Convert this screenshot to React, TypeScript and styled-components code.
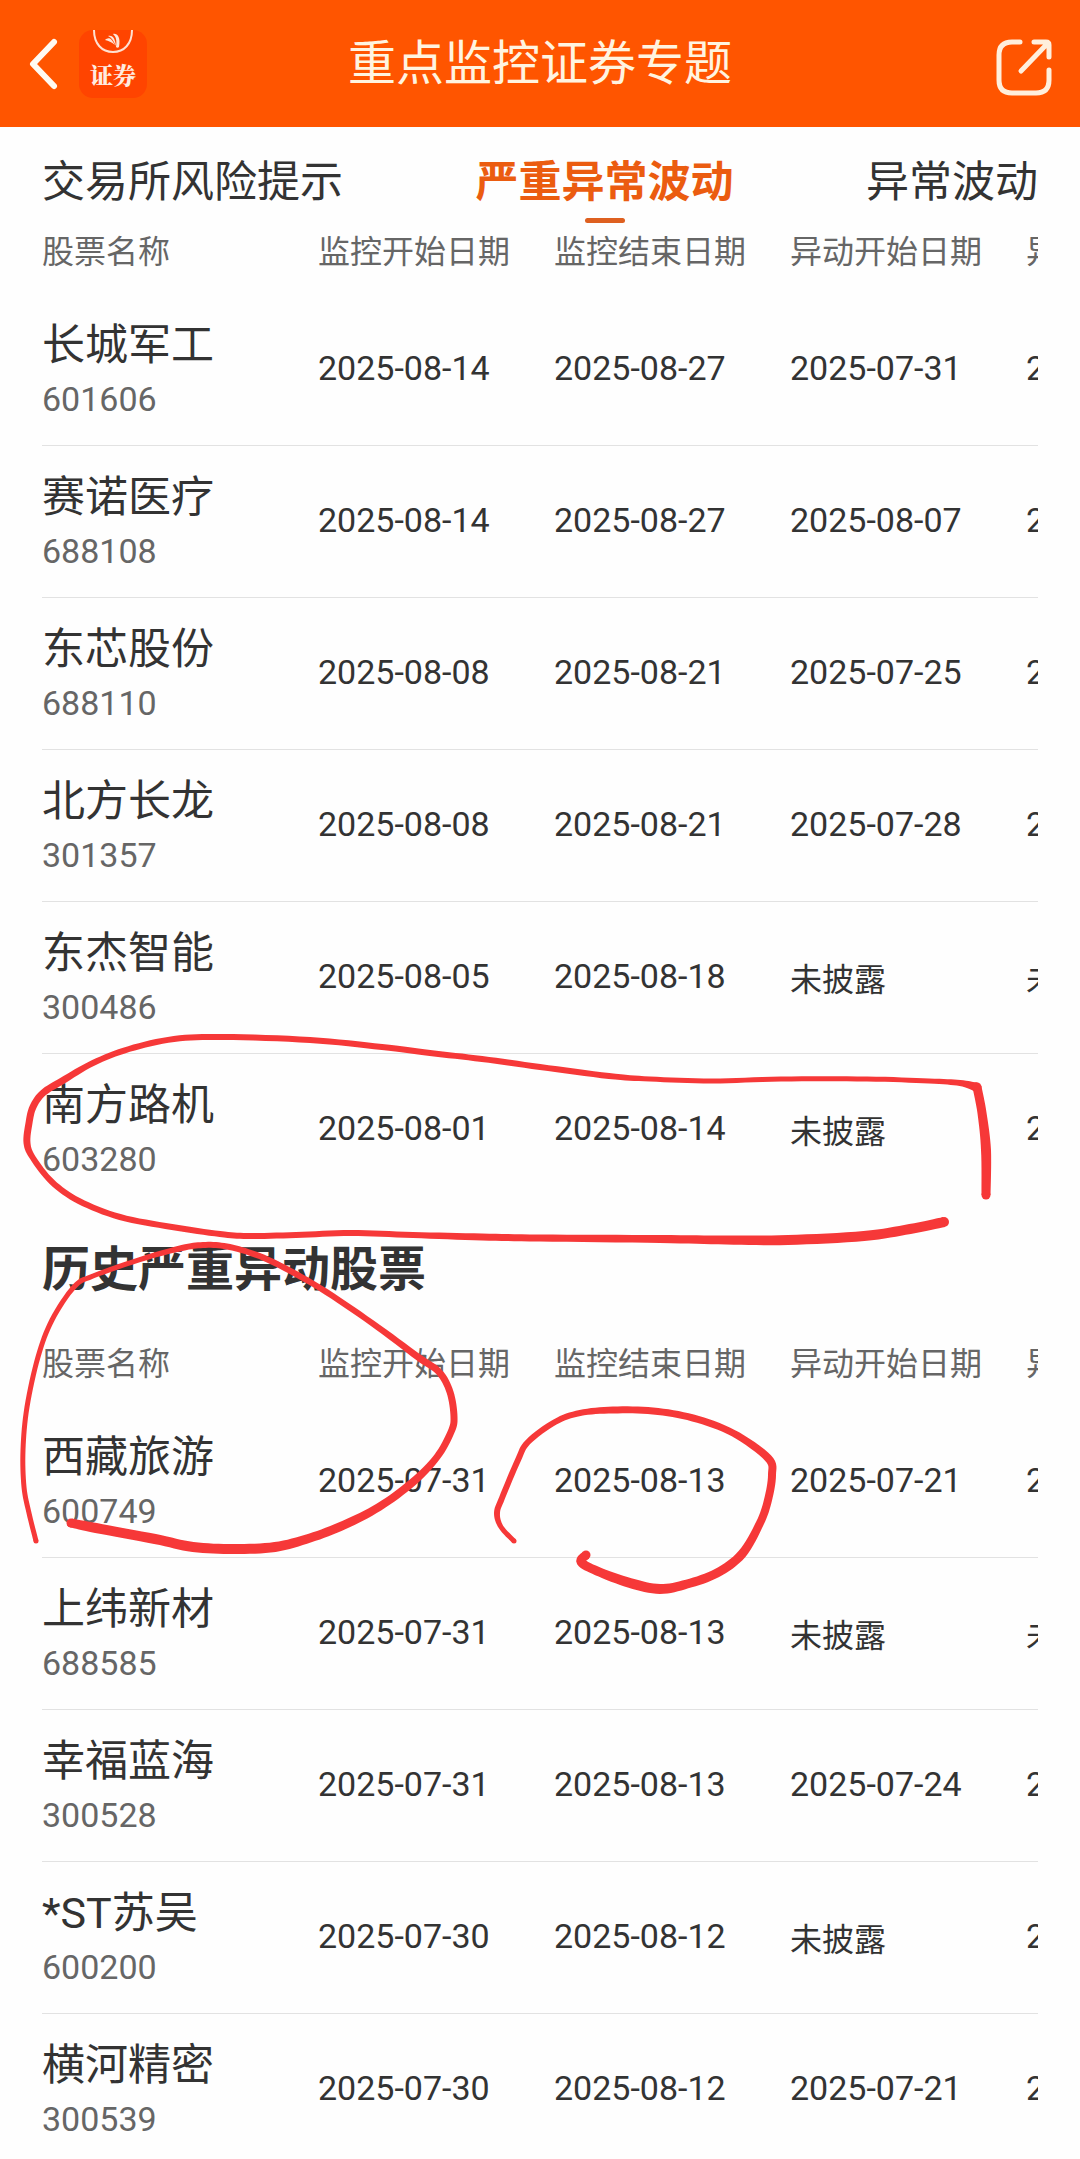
import React from "react";
import styled, { createGlobalStyle, css } from "styled-components";

const GlobalStyle = createGlobalStyle`
  * { box-sizing: border-box; }
  html, body { margin: 0; padding: 0; background: #fefefe; }
  body {
    font-family: Roboto, "Noto Sans CJK SC", sans-serif;
    color: #333333;
  }
  button { font: inherit; border: 0; padding: 0; background: none; color: inherit; cursor: pointer; }
`;

const Screen = styled.div`
  display: flex;
  flex-direction: column;
  height: 100vh;
  overflow: hidden;
`;

const TopBar = styled.header`
  flex: none;
  display: grid;
  grid-template-columns: 1fr auto 1fr;
  align-items: center;
  height: 127px;
  padding: 0 24px;
  background: #ff5500;
`;

const BarGroup = styled.div<{ $end?: boolean }>`
  display: flex;
  align-items: center;
  gap: 16px;
  justify-content: ${(p) => (p.$end ? "flex-end" : "flex-start")};
`;

const Title = styled.h1`
  margin: 0;
  font-size: 48px;
  line-height: 64px;
  font-weight: 400;
  color: #fff4e0;
`;

const IconButton = styled.button`
  display: flex;
  align-items: center;
  justify-content: center;
`;

const Brand = styled.a`
  display: flex;
  flex-direction: column;
  align-items: center;
  width: 68px;
  height: 68px;
  border-radius: 14px;
  background: #ff4400;
  color: #ffece0;
  text-decoration: none;
  font-family: "Noto Serif CJK SC", "Noto Sans CJK SC", serif;
  font-size: 23px;
  line-height: 38px;
  font-weight: 900;
`;

const Tabs = styled.nav`
  flex: none;
  display: flex;
  justify-content: space-between;
  height: 102px;
  padding: 23px 42px 0;
`;

const Tab = styled.button<{ $active?: boolean }>`
  display: flex;
  flex-direction: column;
  align-items: center;
  align-self: flex-start;
  gap: 4px;
  font-size: 43px;
  line-height: 64px;
  white-space: nowrap;
  ${(p) =>
    p.$active &&
    css`
      font-weight: 700;
      color: #eb5c10;
      &::after {
        content: "";
        width: 40px;
        height: 5px;
        border-radius: 3px;
        background: #de6020;
      }
    `}
`;

const Content = styled.main`
  flex: 1;
  min-height: 0;
  position: relative;
  overflow-y: auto;
  scrollbar-width: none;
`;

const TableScroller = styled.div`
  margin: 0 42px;
  overflow-x: auto;
  scrollbar-width: none;
`;

const StockTable = styled.table`
  width: 1208px;
  table-layout: fixed;
  border-collapse: separate;
  border-spacing: 0;
`;

const NameCol = styled.col`
  width: 264px;
`;

const DateCol = styled.col`
  width: 236px;
`;

const HeadCell = styled.th<{ $first?: boolean }>`
  height: 65px;
  padding: 0 0 0 ${(p) => (p.$first ? 0 : 12)}px;
  vertical-align: top;
  text-align: left;
  font-size: 32px;
  line-height: 46px;
  font-weight: 400;
  color: #666666;
  white-space: nowrap;
`;

const Row = styled.tr`
  & > * {
    height: 152px;
    border-bottom: 1px solid #e2e2e2;
  }
  &:last-child > * {
    border-bottom-color: transparent;
  }
`;

const NameCell = styled.th`
  padding: 19px 0 0;
  vertical-align: top;
  text-align: left;
  font-weight: 400;
`;

const StockName = styled.div`
  font-size: 43px;
  line-height: 64px;
  white-space: nowrap;
`;

const StockCode = styled.div`
  font-size: 34px;
  line-height: 44px;
  color: #666666;
`;

const ValueCell = styled.td<{ $text?: boolean }>`
  padding: ${(p) => (p.$text ? 56 : 52)}px 0 0 12px;
  vertical-align: top;
  font-size: ${(p) => (p.$text ? 32 : 34)}px;
  line-height: 44px;
  white-space: nowrap;
`;

const SectionTitle = styled.h2`
  margin: 0;
  padding: 32px 42px 39px;
  font-size: 48px;
  line-height: 64px;
  font-weight: 700;
`;

const InkLayer = styled.svg`
  position: absolute;
  top: 0;
  left: 0;
  pointer-events: none;
`;

const NONE = "未披露";
const COLUMNS = ["股票名称", "监控开始日期", "监控结束日期", "异动开始日期", "异动结束日期"];

type Stock = { name: string; code: string; values: string[] };

const current: Stock[] = [
  { name: "长城军工", code: "601606", values: ["2025-08-14", "2025-08-27", "2025-07-31", "2025-08-13"] },
  { name: "赛诺医疗", code: "688108", values: ["2025-08-14", "2025-08-27", "2025-08-07", "2025-08-13"] },
  { name: "东芯股份", code: "688110", values: ["2025-08-08", "2025-08-21", "2025-07-25", "2025-08-07"] },
  { name: "北方长龙", code: "301357", values: ["2025-08-08", "2025-08-21", "2025-07-28", "2025-08-07"] },
  { name: "东杰智能", code: "300486", values: ["2025-08-05", "2025-08-18", NONE, NONE] },
  { name: "南方路机", code: "603280", values: ["2025-08-01", "2025-08-14", NONE, "2025-07-31"] },
];

const history: Stock[] = [
  { name: "西藏旅游", code: "600749", values: ["2025-07-31", "2025-08-13", "2025-07-21", "2025-07-30"] },
  { name: "上纬新材", code: "688585", values: ["2025-07-31", "2025-08-13", NONE, NONE] },
  { name: "幸福蓝海", code: "300528", values: ["2025-07-31", "2025-08-13", "2025-07-24", "2025-07-30"] },
  { name: "*ST苏吴", code: "600200", values: ["2025-07-30", "2025-08-12", NONE, "2025-07-29"] },
  { name: "横河精密", code: "300539", values: ["2025-07-30", "2025-08-12", "2025-07-21", "2025-07-29"] },
];

function Stocks({ rows, label }: { rows: Stock[]; label: string }) {
  return (
    <TableScroller>
      <StockTable aria-label={label}>
        <colgroup>
          <NameCol />
          <DateCol />
          <DateCol />
          <DateCol />
          <DateCol />
        </colgroup>
        <thead>
          <tr>
            {COLUMNS.map((c, i) => (
              <HeadCell key={c} scope="col" $first={i === 0}>
                {c}
              </HeadCell>
            ))}
          </tr>
        </thead>
        <tbody>
          {rows.map((r) => (
            <Row key={r.code}>
              <NameCell scope="row">
                <StockName>{r.name}</StockName>
                <StockCode>{r.code}</StockCode>
              </NameCell>
              {r.values.map((v, i) => (
                <ValueCell key={i} $text={v === NONE}>
                  {v}
                </ValueCell>
              ))}
            </Row>
          ))}
        </tbody>
      </StockTable>
    </TableScroller>
  );
}

/* Hand-drawn marks: each point is [x, y, pen width]. */
type Ink = [number, number, number][];

const inks: Ink[] = [
  [
    [944, 1222, 10], [910, 1229, 10], [864, 1236, 10], [788, 1240, 10], [726, 1240, 9], [660, 1239, 8],
    [540, 1238, 7], [482, 1237, 7], [413, 1235, 6], [351, 1233, 6], [296, 1235, 6], [248, 1236, 6],
    [220, 1234, 6], [172, 1227, 6], [120, 1217, 6], [79, 1201, 6], [52, 1182, 6], [33, 1158, 6],
    [27, 1143, 7], [29, 1123, 7], [33, 1107, 7], [43, 1093, 7], [62, 1081, 7], [93, 1063, 6],
    [129, 1049, 6], [174, 1039, 6], [224, 1037, 6], [310, 1040, 6], [382, 1047, 6], [430, 1053, 6],
    [482, 1059, 6], [540, 1067, 6], [609, 1076, 6], [650, 1079, 5], [712, 1081, 5], [781, 1079, 5],
    [867, 1079, 5], [929, 1081, 5], [960, 1083, 6], [976, 1087, 9],
  ],
  [[977, 1087, 9], [982, 1113, 9], [986, 1150, 10], [986, 1195, 9]],
  [
    [71, 1523, 9], [96, 1528, 10], [155, 1539, 10], [193, 1547, 10], [234, 1549, 10], [275, 1547, 10],
    [310, 1538, 9], [344, 1525, 9], [379, 1507, 8], [413, 1482, 8], [437, 1457, 7], [451, 1432, 7],
    [454, 1417, 7], [450, 1392, 7], [439, 1372, 7], [418, 1357, 7], [372, 1323, 6], [320, 1288, 6],
    [275, 1263, 6], [248, 1252, 6], [224, 1246, 6], [203, 1245, 6], [182, 1248, 6], [145, 1258, 5],
    [93, 1276, 5], [74, 1287, 5], [52, 1320, 5], [38, 1357, 5], [27, 1407, 5], [23, 1450, 5],
    [24, 1487, 5], [29, 1513, 5], [36, 1541, 5],
  ],
  [
    [586, 1555, 9], [581, 1562, 9], [597, 1571, 9], [630, 1583, 10], [660, 1589, 10], [687, 1584, 9],
    [717, 1573, 9], [742, 1554, 9], [760, 1523, 8], [768, 1500, 8], [772, 1475, 8], [768, 1458, 8],
    [733, 1433, 7], [693, 1418, 7], [653, 1411, 7], [613, 1410, 7], [580, 1413, 6], [555, 1422, 6],
    [528, 1442, 6], [518, 1460, 6], [502, 1498, 6], [497, 1513, 6], [501, 1527, 5], [514, 1541, 5],
  ],
];

function spline(a: number, b: number, c: number, d: number, t: number) {
  return 0.5 * (2 * b + (c - a) * t + (2 * a - 5 * b + 4 * c - d) * t * t + (3 * b - a - 3 * c + d) * t * t * t);
}

const STEPS = 8;

function smooth(points: Ink): Ink {
  const out: Ink = [];
  for (let i = 0; i < points.length - 1; i++) {
    const p0 = points[Math.max(0, i - 1)];
    const p1 = points[i];
    const p2 = points[i + 1];
    const p3 = points[Math.min(points.length - 1, i + 2)];
    for (let s = 0; s < STEPS; s++) {
      const t = s / STEPS;
      out.push([
        spline(p0[0], p1[0], p2[0], p3[0], t),
        spline(p0[1], p1[1], p2[1], p3[1], t),
        p1[2] + (p2[2] - p1[2]) * t,
      ]);
    }
  }
  out.push(points[points.length - 1]);
  return out;
}

/* The outline runs down one side of the pen line and back up the other. */
function outline(line: Ink): string {
  const left: string[] = [];
  const right: string[] = [];
  line.forEach(([x, y, w], i) => {
    const a = line[Math.max(0, i - 1)];
    const b = line[Math.min(line.length - 1, i + 1)];
    const dx = b[0] - a[0];
    const dy = b[1] - a[1];
    const len = Math.hypot(dx, dy) || 1;
    const nx = (-dy / len) * (w / 2);
    const ny = (dx / len) * (w / 2);
    left.push(`${(x + nx).toFixed(2)} ${(y + ny).toFixed(2)}`);
    right.unshift(`${(x - nx).toFixed(2)} ${(y - ny).toFixed(2)}`);
  });
  return `M${left.concat(right).join("L")}Z`;
}

function InkStroke({ points }: { points: Ink }) {
  const first = points[0];
  const last = points[points.length - 1];
  return (
    <g>
      <path d={outline(smooth(points))} />
      <circle cx={first[0]} cy={first[1]} r={first[2] / 2} />
      <circle cx={last[0]} cy={last[1]} r={last[2] / 2} />
    </g>
  );
}

export default function App() {
  return (
    <Screen>
      <GlobalStyle />
      <TopBar>
        <BarGroup>
          <IconButton aria-label="返回">
            <svg width="39" height="56" viewBox="0 0 39 56" fill="none" stroke="#fffaf2" strokeWidth="6" strokeLinecap="round" strokeLinejoin="round">
              <path d="M30 6 L9 28 L30 50" />
            </svg>
          </IconButton>
          <Brand href="#">
            <svg width="44" height="26" viewBox="0 0 44 26" fill="none" stroke="#ffe0d0" strokeWidth="2">
              <path d="M3 0 C3 14 11 22 22 22 C33 22 41 14 41 0" />
              <g fill="#ffe6d8" stroke="none">
                <path d="M14 10 C17 7 20 7 24 15 C20 12 18 11 14 10 Z" />
                <path d="M17 6 C21 5 24 7 25 16 C22 10 21 8 17 6 Z" />
                <path d="M22 4 C26 3 30 7 28 17 C27 18 26 18 25 17 C26 10 25 7 22 4 Z" />
              </g>
            </svg>
            证券
          </Brand>
        </BarGroup>
        <Title>重点监控证券专题</Title>
        <BarGroup $end>
          <IconButton aria-label="分享">
            <svg width="64" height="64" viewBox="0 0 64 64" fill="none" stroke="#ffefdc" strokeWidth="5" strokeLinecap="round" strokeLinejoin="round">
              <path d="M28 10 H20 Q7 10 7 23 V48 Q7 61 20 61 H44 Q57 61 57 48 V38" />
              <path d="M42 10 H54 Q57 10 57 13 V25 M55 12 L29 39" />
            </svg>
          </IconButton>
        </BarGroup>
      </TopBar>
      <Tabs>
        <Tab>交易所风险提示</Tab>
        <Tab $active aria-current="page">严重异常波动</Tab>
        <Tab>异常波动</Tab>
      </Tabs>
      <Content>
        <Stocks rows={current} label="严重异常波动" />
        <SectionTitle>历史严重异动股票</SectionTitle>
        <Stocks rows={history} label="历史严重异动股票" />
        <InkLayer width="1080" height="1400" viewBox="0 229 1080 1400" fill="#f63838" aria-hidden="true">
          {inks.map((p, i) => (
            <InkStroke key={i} points={p} />
          ))}
        </InkLayer>
      </Content>
    </Screen>
  );
}
